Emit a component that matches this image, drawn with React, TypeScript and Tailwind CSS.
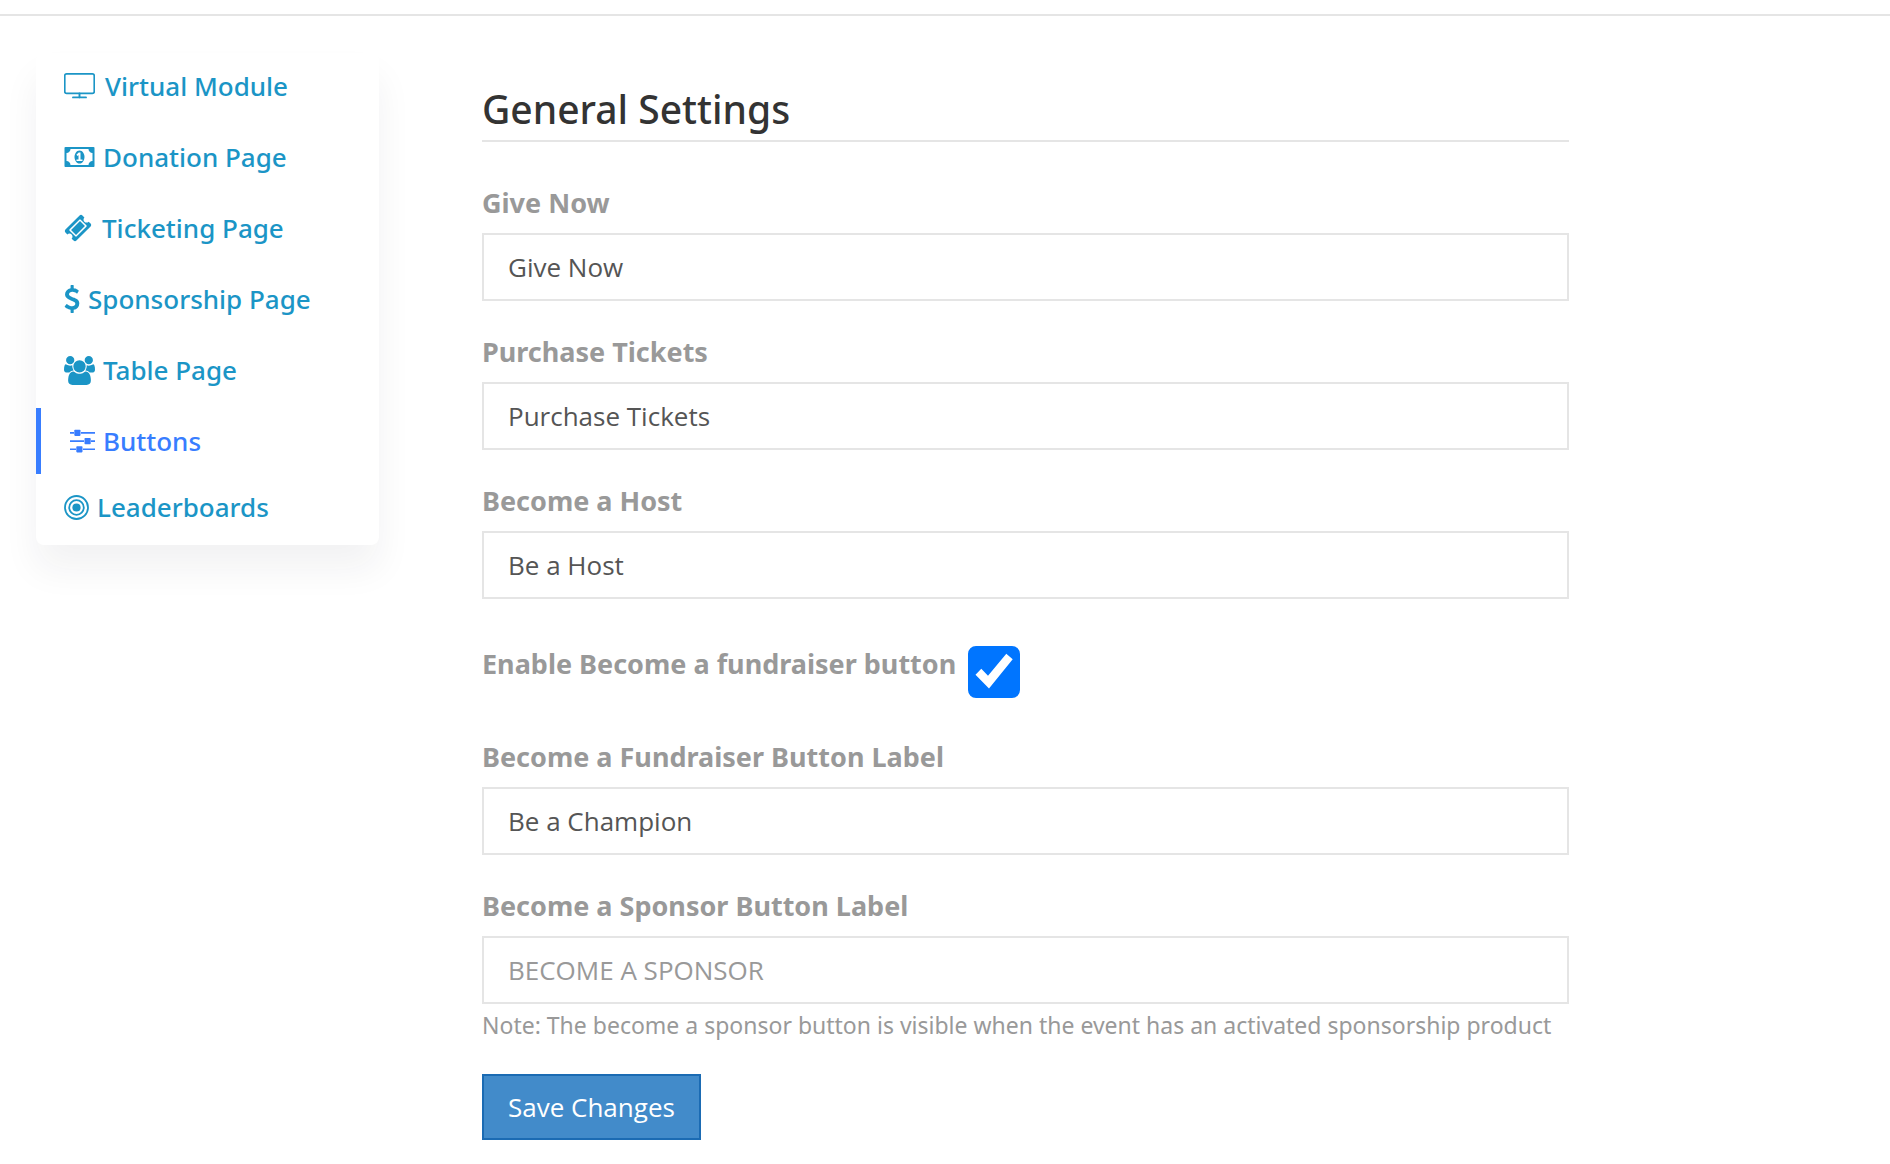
import clsx from "clsx";
import React, { useState } from "react";

const MonitorIcon = () => (
  <svg className="w-[31px] h-[26px]" viewBox="0 0 31 26" fill="none" stroke="currentColor">
    <rect x="0.75" y="0.9" width="29.5" height="19.5" rx="1.8" strokeWidth="1.7" />
    <path d="M15.5 20.5v4M9 24.4h13" strokeWidth="1.9" strokeLinecap="round" />
  </svg>
);

const MoneyIcon = () => (
  <svg className="w-[31px] h-7" viewBox="0 0 1920 1792" fill="currentColor">
    <path d="M768 1152h384v-96h-128v-448h-114l-148 137 77 80q42-37 55-57h2v288h-128v96zm512-256q0 70-21 142t-59.5 134-101.5 101-138 39-138-39-101.5-101-59.5-134-21-142 21-142 59.5-134 101.5-101 138-39 138 39 101.5 101 59.5 134 21 142zm512 256v-512q-106 0-181-75t-75-181h-1152q0 106-75 181t-181 75v512q106 0 181 75t75 181h1152q0-106 75-181t181-75zm128-832v1152q0 26-19 45t-45 19h-1792q-26 0-45-19t-19-45v-1152q0-26 19-45t45-19h1792q26 0 45 19t19 45z" />
  </svg>
);

const TicketIcon = () => (
  <svg className="w-7 h-7" viewBox="0 0 1792 1792" fill="currentColor">
    <path d="M1024 452l316 316-572 572-316-316zm-211 979l618-618q19-19 19-45t-19-45l-362-362q-18-18-45-18t-45 18l-618 618q-19 19-19 45t19 45l362 362q18 18 45 18t45-18zm889-637l-907 908q-37 37-90.5 37t-90.5-37l-126-126q56-56 56-136t-56-136-136-56-136 56l-125-126q-37-37-37-90.5t37-90.5l907-906q37-37 90.5-37t90.5 37l125 125q-56 56-56 136t56 136 136 56 136-56l126 125q37 37 37 90.5t-37 90.5z" />
  </svg>
);

const DollarIcon = () => (
  <svg className="w-4 h-7" viewBox="384 0 1024 1792" fill="currentColor">
    <path d="M1362 1185q0 153-99.500 263.500t-258.500 136.500v175q0 14-9 23t-23 9h-135q-13 0-22.500-9.500t-9.500-22.500v-175q-66-9-127.500-31t-101.500-44.500-74-48-46.500-37.500-17.500-18q-17-21-2-41l103-135q7-10 23-12 15-2 24 9l2 2q113 99 243 125 37 8 74 8 81 0 142.500-43t61.500-122q0-28-15-53t-33.500-42-58.500-37.500-66-32-80-32.500q-39-16-61.500-25t-61.500-26.500-62.500-31-56.500-35.500-53.500-42.500-43.500-49-35.500-58-21-66.500-8.500-78q0-138 98-242t255-134v-180q0-13 9.500-22.500t22.500-9.500h135q14 0 23 9t9 23v176q57 6 110.500 23t87 33.500 63.500 37.500 39 29 15 14q17 18 5 38l-81 146q-8 15-23 16-14 3-27-7-3-3-14.500-12t-39-26.500-58.500-32-74.500-26-85.500-11.500q-95 0-155 43t-60 111q0 26 8.500 48t29.500 41.500 39.500 33 56 31 60.500 27 70 27.500q53 20 81 31.500t76 35 75.500 42.500 62 50 53 63.500 31.500 76.500 13 94z" />
  </svg>
);

const UsersIcon = () => (
  <svg className="w-[31px] h-[29px]" viewBox="0 0 1920 1792" fill="currentColor">
    <path d="M593 896q-162 5-265 128h-134q-82 0-138-40.500t-56-118.500q0-353 124-353 6 0 43.500 21t97.500 42.500 119 21.500q67 0 133-23-5 37-5 66 0 139 81 256zm1071 637q0 120-73 189.500t-194 69.500h-874q-121 0-194-69.500t-73-189.500q0-53 3.500-103.500t14-109 26.500-108.500 43-97.500 62-81 85.500-53.500 111.500-20q10 0 43 21.500t73 48 107 48 135 21.500 135-21.500 107-48 73-48 43-21.500q61 0 111.500 20t85.500 53.500 62 81 43 97.500 26.500 108.500 14 109 3.500 103.500zm-1024-1277q0 106-75 181t-181 75-181-75-75-181 75-181 181-75 181 75 75 181zm704 384q0 159-112.500 271.500t-271.500 112.500-271.500-112.500-112.500-271.500 112.500-271.500 271.500-112.500 271.500 112.500 112.500 271.500zm576 225q0 78-56 118.500t-138 40.500h-134q-103-123-265-128 81-117 81-256 0-29-5-66 66 23 133 23 59 0 119-21.500t97.500-42.500 43.500-21q124 0 124 353zm-128-609q0 106-75 181t-181 75-181-75-75-181 75-181 181-75 181 75 75 181z" />
  </svg>
);

const SlidersIcon = () => (
  <svg className="w-[25px] h-6" viewBox="0 0 25 24" fill="currentColor">
    <path d="M0 3h4v1.700H0zM11 3h14v1.700H11zM0 11.200h14v1.700H0zM21 11.200h4v1.700h-4zM0 19.400h6v1.700H0zM13 19.400h12v1.700H13z" />
    <rect x="4.300" y="0.700" width="6.200" height="6.200" rx="0.800" />
    <rect x="14.500" y="9" width="6.200" height="6.200" rx="0.800" />
    <rect x="6.300" y="17.200" width="6.200" height="6.200" rx="0.800" />
  </svg>
);

const TargetIcon = () => (
  <svg className="w-[25px] h-[25px]" viewBox="0 0 25 25" fill="none" stroke="currentColor" strokeWidth="1.800">
    <circle cx="12.500" cy="12.500" r="11.500" />
    <circle cx="12.500" cy="12.500" r="7.300" />
    <circle cx="12.500" cy="12.500" r="4.100" fill="currentColor" stroke="none" />
  </svg>
);

interface INavItem {
  title: string;
  icon: React.ReactNode;
  gap: string;
  active?: boolean;
}

const navItems: INavItem[] = [
  { title: "Virtual Module", icon: <MonitorIcon />, gap: "gap-2.5" },
  { title: "Donation Page", icon: <MoneyIcon />, gap: "gap-2" },
  { title: "Ticketing Page", icon: <TicketIcon />, gap: "gap-2.5" },
  { title: "Sponsorship Page", icon: <DollarIcon />, gap: "gap-2" },
  { title: "Table Page", icon: <UsersIcon />, gap: "gap-2" },
  { title: "Buttons", icon: <SlidersIcon />, gap: "gap-2", active: true },
  { title: "Leaderboards", icon: <TargetIcon />, gap: "gap-2" },
];

const Sidebar = () => (
  <nav className="w-[343px] shrink-0 rounded-lg bg-white shadow-[0_24px_36px_rgba(31,35,51,0.06)]">
    <ul>
      {navItems.map((item) => (
        <li key={item.title} className={clsx(!item.active && "pb-[5px]")}>
          <a
            href="#"
            className={clsx(
              "flex h-[66px] items-center text-[26px] leading-8 font-medium",
              item.gap,
              item.active
                ? "border-l-[5px] border-[#387dff] pl-[29px] text-[#387dff]"
                : "pl-7 text-[#1b95c6]"
            )}
          >
            {item.icon}
            {item.title}
          </a>
        </li>
      ))}
    </ul>
  </nav>
);

interface IFieldProps {
  id: string;
  label: string;
  value?: string;
  placeholder?: string;
  note?: string;
}

const labelClass = "text-[27px] leading-9 font-bold text-[#999999]";

const Field = ({ id, label, value, placeholder, note }: IFieldProps) => (
  <div>
    <label htmlFor={id} className={clsx("block", labelClass)}>
      {label}
    </label>
    <input
      id={id}
      type="text"
      defaultValue={value}
      placeholder={placeholder}
      className="mt-3 block h-[68px] w-full border-2 border-[#e5e5e5] bg-white px-6 font-['Open_Sans',sans-serif] text-[26px] text-[#555555] placeholder:text-[#999999]"
    />
    {note && (
      <p className="mt-[5px] text-[23px] leading-8 text-[#999999]">{note}</p>
    )}
  </div>
);

const App = () => {
  const [enabled, setEnabled] = useState(true);

  return (
    <div className="border-t-2 border-[#e5e5e5] mt-3.5 font-['Noto_Sans',sans-serif]">
      <div className="flex items-start px-9 pt-[37px] gap-[103px]">
        <Sidebar />
        <main className="min-w-0 max-w-[1087px] flex-1 pt-7 pb-6">
          <h1 className="border-b-2 border-[#e5e5e5] pb-1 text-[39px] leading-[55px] font-medium text-[#333333]">
            General Settings
          </h1>
          <form onSubmit={(e) => e.preventDefault()}>
            <div className="mt-[43px] flex flex-col gap-[33px]">
              <Field id="give-now" label="Give Now" value="Give Now" />
              <Field
                id="purchase-tickets"
                label="Purchase Tickets"
                value="Purchase Tickets"
              />
              <Field id="become-host" label="Become a Host" value="Be a Host" />
            </div>
            <div className="mt-[47px] mb-[41px] flex items-start gap-3">
              <label htmlFor="enable-fundraiser" className={labelClass}>
                Enable Become a fundraiser button
              </label>
              <div className="grid h-[52px] w-[52px]">
                <input
                  id="enable-fundraiser"
                  type="checkbox"
                  checked={enabled}
                  onChange={(e) => setEnabled(e.target.checked)}
                  className="col-start-1 row-start-1 h-[52px] w-[52px] appearance-none rounded-lg border-2 border-[#767676] bg-white checked:border-[#0075ff] checked:bg-[#0075ff]"
                />
                {enabled && (
                  <svg
                    className="pointer-events-none col-start-1 row-start-1 h-[52px] w-[52px]"
                    viewBox="0 0 52 52"
                    fill="#ffffff"
                  >
                    <path d="M7.500 28.700L13.300 22.700L20 29.800L38.300 7.800L44.700 13.200L21 42.500Z" />
                  </svg>
                )}
              </div>
            </div>
            <div className="flex flex-col gap-[33px]">
              <Field
                id="fundraiser-label"
                label="Become a Fundraiser Button Label"
                value="Be a Champion"
              />
              <Field
                id="sponsor-label"
                label="Become a Sponsor Button Label"
                placeholder="BECOME A SPONSOR"
                note="Note: The become a sponsor button is visible when the event has an activated sponsorship product"
              />
            </div>
            <button
              type="submit"
              className="mt-[33px] h-[66px] border-2 border-[#1b6bb3] bg-[#428bca] px-6 font-['Open_Sans',sans-serif] text-[26px] text-white"
            >
              Save Changes
            </button>
          </form>
        </main>
      </div>
    </div>
  );
};

export default App;
